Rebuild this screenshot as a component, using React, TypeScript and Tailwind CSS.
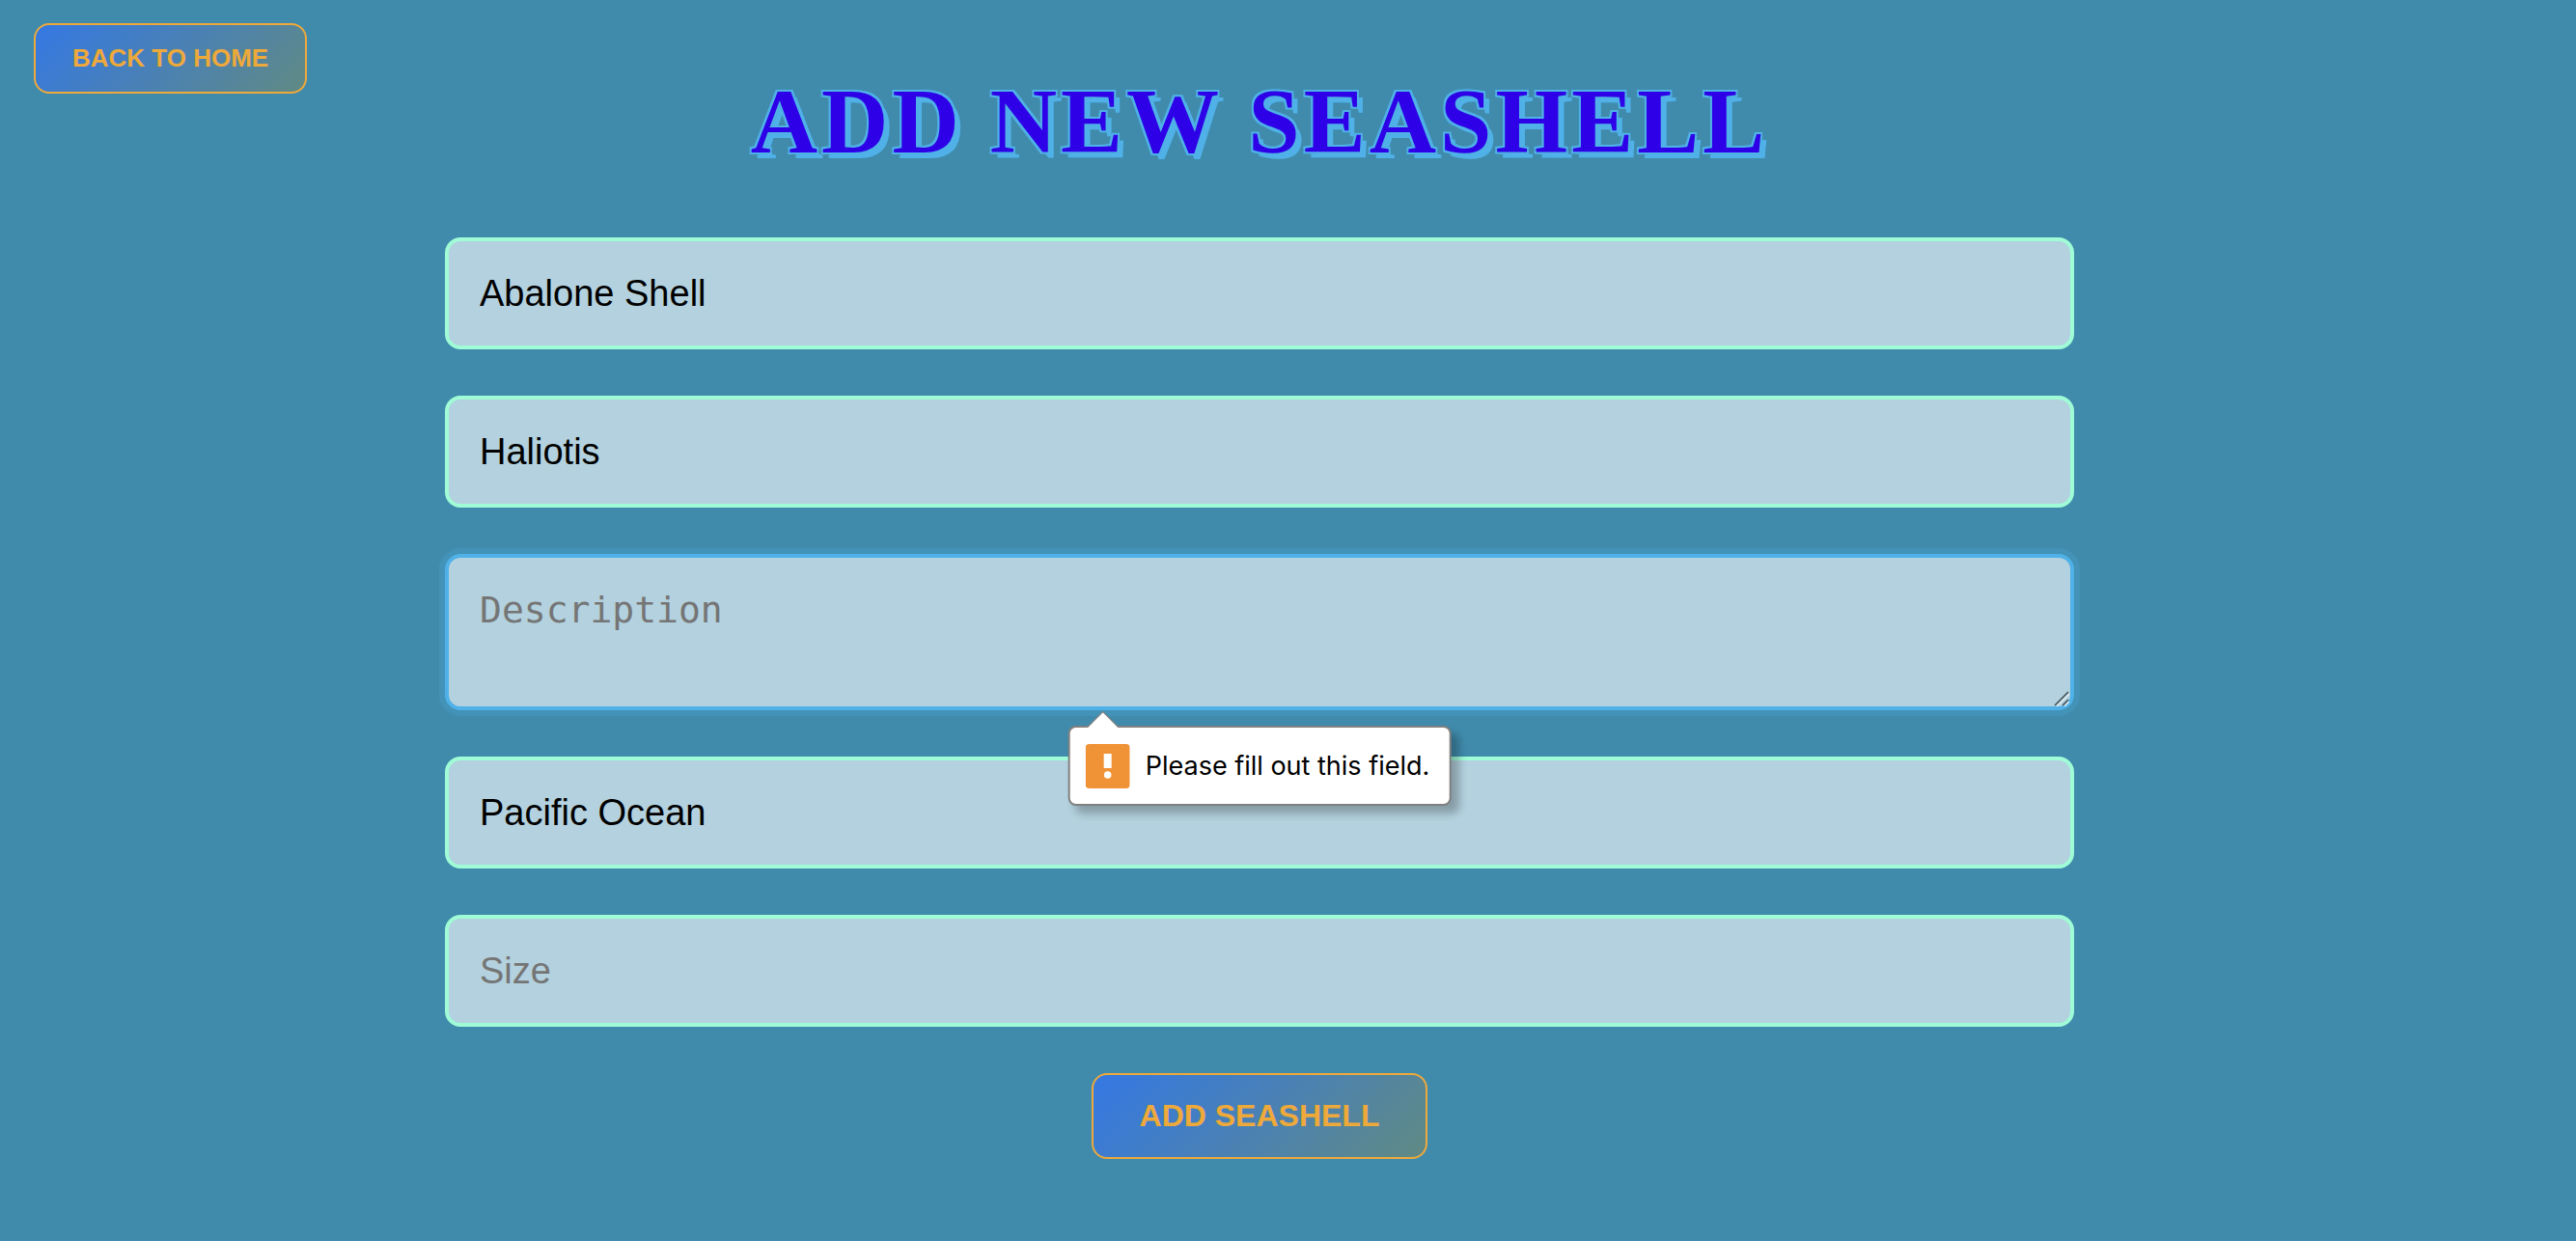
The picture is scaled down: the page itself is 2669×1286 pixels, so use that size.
import { useState } from 'react';

const fieldClass =
  'block w-full rounded-2xl border-4 bg-[#b3d1de] px-8 text-[38px] leading-[44px] text-black outline-none placeholder:text-[#757575]';

const buttonClass =
  'cursor-pointer rounded-2xl border-2 border-[#eea93b] bg-[linear-gradient(135deg,#3478e4,#608a84)] font-bold text-[#eea93b] uppercase';

type TextFieldProps = { name: string; label: string; initial: string };

function TextField({ name, label, initial }: TextFieldProps) {
  const [value, setValue] = useState(initial);
  return (
    <input
      type="text"
      name={name}
      aria-label={label}
      placeholder={label}
      value={value}
      onChange={(e) => setValue(e.target.value)}
      className={`${fieldClass} h-[116px] border-[#9ffcd7]`}
    />
  );
}

function ValidationBubble() {
  return (
    <div
      role="alert"
      id="description-error"
      className="absolute top-full left-1/2 z-10 mt-4 flex h-[83px] -translate-x-1/2 items-center gap-4 rounded-lg border-2 border-[#808080] bg-white pr-5 pl-4 whitespace-nowrap shadow-[8px_8px_8px_rgba(0,0,0,0.25)]"
    >
      <svg
        aria-hidden="true"
        className="absolute -top-[18px] left-4 h-[19px] w-[36px]"
        viewBox="0 0 36 19"
      >
        <path d="M1 19 18 1.5 35 19Z" fill="#fff" />
        <path d="M2 17.5 18 1.5 34 17.5" fill="none" stroke="#808080" strokeWidth="1.2" />
      </svg>
      <svg aria-hidden="true" className="size-[46px] shrink-0" viewBox="0 0 46 46">
        <rect width="46" height="46" rx="4" fill="#f09236" />
        <rect x="19" y="10" width="8" height="15" fill="#fff" />
        <circle cx="23" cy="32" r="3.8" fill="#fff" />
      </svg>
      <span className="font-[Inter,sans-serif] text-[27px] leading-8 text-black">
        Please fill out this field.
      </span>
    </div>
  );
}

function DescriptionField() {
  const [value, setValue] = useState('');
  return (
    <div className="relative">
      <textarea
        name="description"
        aria-label="Description"
        aria-describedby="description-error"
        placeholder="Description"
        rows={2}
        required
        value={value}
        onChange={(e) => setValue(e.target.value)}
        className={`${fieldClass} h-[162px] resize-none border-[#4fb1e7] py-8 font-['DejaVu_Sans_Mono',monospace] shadow-[0_0_0_6px_rgba(79,177,231,0.2)]`}
      />
      <svg
        aria-hidden="true"
        className="pointer-events-none absolute right-[5px] bottom-[4px] size-4"
        viewBox="0 0 16 16"
        fill="none"
      >
        <path d="M3 16 16 3M11 16 16 11" stroke="#e4eef2" strokeWidth="1.4" />
        <path d="M1 15 15 1M9 15 15 9" stroke="#45525a" strokeWidth="1.6" />
      </svg>
      <ValidationBubble />
    </div>
  );
}

export default function App() {
  return (
    <main className="min-h-screen bg-[#408bac] pb-12 font-['Liberation_Sans',Arial,sans-serif]">
      <header className="grid pt-6">
        <button
          type="button"
          className={`${buttonClass} col-start-1 row-start-1 ml-[35px] h-[73px] self-start justify-self-start px-[38px] pb-[2px] text-[26px] leading-7`}
        >
          Back to Home
        </button>
        <h1 className="col-start-1 row-start-1 mt-[46px] mr-[59px] justify-self-center font-['Liberation_Serif','Times_New_Roman',serif] text-8xl leading-[112px] font-bold tracking-[4px] text-[#2e00e8] uppercase [text-shadow:-2px_-2px_0_#4fb1e7,2px_-2px_0_#4fb1e7,-2px_2px_0_#4fb1e7,2px_2px_0_#4fb1e7,6px_6px_0_#4fb1e7]">
          Add New Seashell
        </h1>
      </header>
      <div className="mt-16 mr-[59px] flex justify-center">
        <form
          noValidate
          onSubmit={(e) => e.preventDefault()}
          className="flex w-full max-w-[1688px] flex-col gap-12"
        >
          <TextField name="name" label="Name" initial="Abalone Shell" />
          <TextField name="species" label="Species" initial="Haliotis" />
          <DescriptionField />
          <TextField name="location" label="Location" initial="Pacific Ocean" />
          <TextField name="size" label="Size" initial="" />
          <button
            type="submit"
            className={`${buttonClass} self-center px-12 py-6 text-[32px] leading-[37px]`}
          >
            Add Seashell
          </button>
        </form>
      </div>
    </main>
  );
}
